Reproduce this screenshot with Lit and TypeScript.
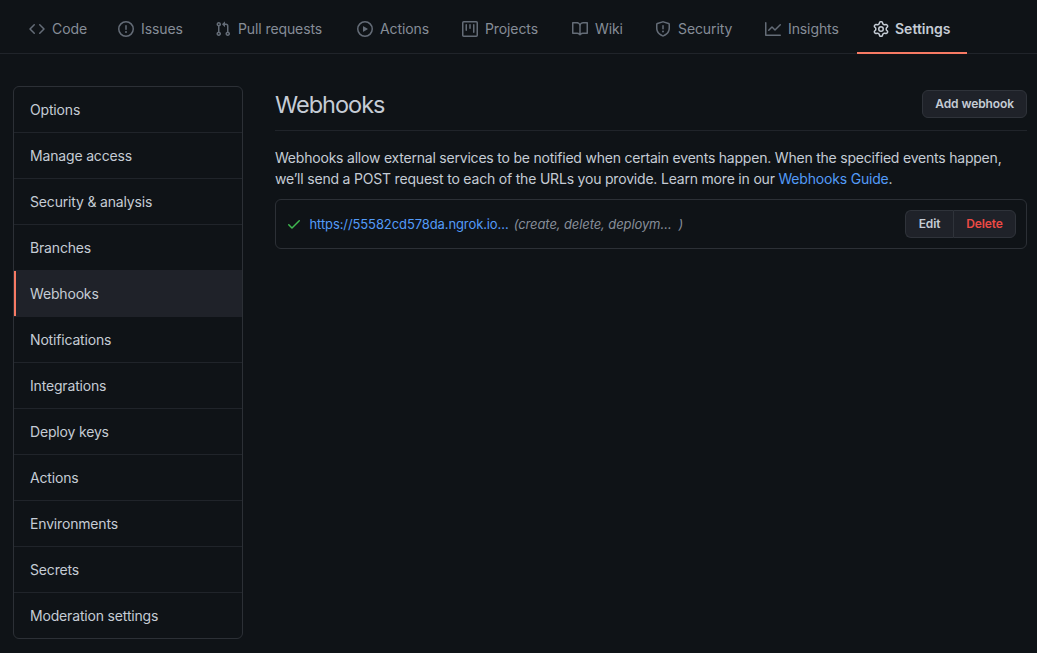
import { LitElement, html, css, svg } from "lit";
import { customElement, property } from "lit/decorators.js";
import { classMap } from "lit/directives/class-map.js";
import { styleMap } from "lit/directives/style-map.js";

const ICONS: Record<string, string> = {
  code: "M4.72 3.22a.75.75 0 011.06 1.06L2.06 8l3.72 3.72a.75.75 0 11-1.06 1.06L.47 8.53a.75.75 0 010-1.06l4.25-4.25zm6.56 0a.75.75 0 10-1.06 1.06L13.94 8l-3.72 3.72a.75.75 0 101.06 1.06l4.25-4.25a.75.75 0 000-1.06l-4.25-4.25z",
  issue: "M8 1.5a6.5 6.5 0 100 13 6.5 6.5 0 000-13zM0 8a8 8 0 1116 0A8 8 0 010 8zm9 3a1 1 0 11-2 0 1 1 0 012 0zm-.25-6.25a.75.75 0 00-1.5 0v3.5a.75.75 0 001.5 0v-3.5z",
  pull: "M7.177 3.073L9.573.677A.25.25 0 0110 .854v4.792a.25.25 0 01-.427.177L7.177 3.427a.25.25 0 010-.354zM3.75 2.5a.75.75 0 100 1.5.75.75 0 000-1.5zm-2.25.75a2.25 2.25 0 113 2.122v5.256a2.251 2.251 0 11-1.5 0V5.372A2.25 2.25 0 011.5 3.25zM11 2.5h-1V4h1a1 1 0 011 1v5.628a2.251 2.251 0 101.5 0V5A2.5 2.5 0 0011 2.5zm1 10.25a.75.75 0 111.5 0 .75.75 0 01-1.5 0zM3.75 12a.75.75 0 100 1.5.75.75 0 000-1.5z",
  play: "M1.5 8a6.5 6.5 0 1113 0 6.5 6.5 0 01-13 0zM8 0a8 8 0 100 16A8 8 0 008 0zM6.379 5.227A.25.25 0 006 5.442v5.117a.25.25 0 00.379.214l4.264-2.559a.25.25 0 000-.428L6.379 5.227z",
  project: "M1.75 0A1.75 1.75 0 000 1.75v12.5C0 15.216.784 16 1.75 16h12.5A1.75 1.75 0 0016 14.25V1.75A1.75 1.75 0 0014.25 0H1.75zM1.5 1.75a.25.25 0 01.25-.25h12.5a.25.25 0 01.25.25v12.5a.25.25 0 01-.25.25H1.75a.25.25 0 01-.25-.25V1.75zM11.75 3a.75.75 0 00-.75.75v7.5a.75.75 0 001.5 0v-7.5a.75.75 0 00-.75-.75zm-8.25.75a.75.75 0 011.5 0v5.5a.75.75 0 01-1.5 0v-5.5zM8 3a.75.75 0 00-.75.75v3.5a.75.75 0 001.5 0v-3.5A.75.75 0 008 3z",
  book: "M0 1.75A.75.75 0 01.75 1h4.253c1.227 0 2.317.59 3 1.501A3.744 3.744 0 0111.006 1h4.245a.75.75 0 01.75.75v10.5a.75.75 0 01-.75.75h-4.507a2.25 2.25 0 00-1.591.659l-.622.621a.75.75 0 01-1.06 0l-.622-.621A2.25 2.25 0 005.258 13H.75a.75.75 0 01-.75-.75V1.75zm8.755 3a2.25 2.25 0 012.25-2.25H14.5v9h-3.757c-.71 0-1.4.201-1.992.572l.004-7.322zm-1.504 7.324l.004-5.073-.002-2.253A2.25 2.25 0 005.003 2.5H1.5v9h3.757a3.75 3.75 0 011.994.574z",
  shield: "M7.467.133a1.75 1.75 0 011.066 0l5.25 1.68A1.75 1.75 0 0115 3.48V7c0 1.566-.32 3.182-1.303 4.682-.983 1.498-2.585 2.813-5.032 3.855a1.7 1.7 0 01-1.33 0c-2.447-1.042-4.049-2.357-5.032-3.855C1.32 10.182 1 8.566 1 7V3.48a1.75 1.75 0 011.217-1.667l5.25-1.68zm.61 1.429a.25.25 0 00-.153 0l-5.25 1.68a.25.25 0 00-.174.238V7c0 1.358.275 2.666 1.057 3.86.784 1.194 2.121 2.34 4.366 3.297a.2.2 0 00.154 0c2.245-.956 3.582-2.104 4.366-3.298C13.225 9.666 13.5 8.36 13.5 7V3.48a.25.25 0 00-.174-.237l-5.25-1.68zM9 10.5a1 1 0 11-2 0 1 1 0 012 0zm-.25-5.75a.75.75 0 10-1.5 0v3a.75.75 0 001.5 0v-3z",
  graph: "M1.5 1.75a.75.75 0 00-1.5 0v12.5c0 .414.336.75.75.75h14.5a.75.75 0 000-1.5H1.5V1.75zm14.28 2.53a.75.75 0 00-1.06-1.06L10 7.94 7.53 5.47a.75.75 0 00-1.06 0L3.22 8.72a.75.75 0 001.06 1.06L7 7.06l2.47 2.47a.75.75 0 001.06 0l5.25-5.25z",
  check: "M13.78 4.22a.75.75 0 010 1.06l-7.25 7.25a.75.75 0 01-1.06 0L2.22 9.28a.75.75 0 011.06-1.06L6 10.94l6.72-6.72a.75.75 0 011.06 0z",
  gear: "M7.429 1.525a6.593 6.593 0 011.142 0c.036.003.108.036.137.146l.289 1.105c.147.56.55.967.997 1.189.174.086.341.183.501.29.417.278.97.423 1.53.27l1.102-.303c.11-.03.175.016.195.046.219.31.41.641.573.989.014.031.022.11-.059.19l-.815.806c-.411.406-.562.957-.53 1.456a4.588 4.588 0 010 .582c-.032.499.119 1.05.53 1.456l.815.806c.08.08.073.159.059.19a6.494 6.494 0 01-.573.99c-.02.029-.086.074-.195.045l-1.103-.303c-.559-.153-1.112-.008-1.529.27-.16.107-.327.204-.5.29-.449.222-.851.628-.998 1.189l-.289 1.105c-.029.11-.101.143-.137.146a6.613 6.613 0 01-1.142 0c-.036-.003-.108-.037-.137-.146l-.289-1.105c-.147-.56-.55-.967-.997-1.189a4.502 4.502 0 01-.501-.29c-.417-.278-.97-.423-1.53-.27l-1.102.303c-.11.03-.175-.016-.195-.046a6.492 6.492 0 01-.573-.989c-.014-.031-.022-.11.059-.19l.815-.806c.411-.406.562-.957.53-1.456a4.587 4.587 0 010-.582c.032-.499-.119-1.05-.53-1.456l-.815-.806c-.08-.08-.073-.159-.059-.19a6.44 6.44 0 01.573-.99c.02-.029.086-.075.195-.045l1.103.303c.559.153 1.112.008 1.529-.27.16-.107.327-.204.5-.29.449-.222.851-.628.998-1.189l.289-1.105c.029-.11.101-.143.137-.146zM8 0c-.236 0-.47.01-.701.03-.743.065-1.29.615-1.458 1.261l-.29 1.106c-.017.066-.078.158-.211.224a5.994 5.994 0 00-.668.386c-.123.082-.233.09-.3.071L3.27 2.776c-.644-.177-1.392.02-1.82.63a7.977 7.977 0 00-.704 1.217c-.315.675-.111 1.422.363 1.891l.815.806c.05.048.098.147.088.294a6.084 6.084 0 000 .772c.01.147-.038.246-.088.294l-.815.806c-.474.469-.678 1.216-.363 1.891.2.428.436.835.704 1.218.428.609 1.176.806 1.82.63l1.103-.303c.066-.019.176-.011.299.071.213.143.436.272.668.386.133.066.194.158.212.224l.289 1.106c.169.646.715 1.196 1.458 1.26a8.094 8.094 0 001.402 0c.743-.064 1.29-.614 1.458-1.26l.29-1.106c.017-.066.078-.158.211-.224a5.98 5.98 0 00.668-.386c.123-.082.233-.09.3-.071l1.102.302c.644.177 1.392-.02 1.82-.63.268-.382.505-.789.704-1.217.315-.675.111-1.422-.364-1.891l-.814-.806c-.05-.048-.098-.147-.088-.294a6.1 6.1 0 000-.772c-.01-.147.039-.246.088-.294l.814-.806c.475-.469.679-1.216.364-1.891a7.992 7.992 0 00-.704-1.218c-.428-.609-1.176-.806-1.82-.63l-1.103.303c-.066.019-.176.011-.299-.071a5.991 5.991 0 00-.668-.386c-.133-.066-.194-.158-.212-.224L10.16 1.29C9.99.645 9.444.095 8.701.031A8.094 8.094 0 008 0zm1.5 8a1.5 1.5 0 11-3 0 1.5 1.5 0 013 0zM11 8a3 3 0 11-6 0 3 3 0 016 0z",
};

@customElement("oct-icon")
class OctIcon extends LitElement {
  @property() name = "code";
  static styles = css`
    :host { display: block; flex: none; width: 16px; height: 16px; }
    svg { display: block; fill: currentColor; }
  `;
  render() {
    return html`<svg width="16" height="16" viewBox="0 0 16 16">
      ${svg`<path fill-rule="evenodd" d=${ICONS[this.name]}></path>`}
    </svg>`;
  }
}

const TABS = [
  { icon: "code", label: "Code", width: 89 },
  { icon: "issue", label: "Issues", width: 97 },
  { icon: "pull", label: "Pull requests", width: 142 },
  { icon: "play", label: "Actions", width: 105 },
  { icon: "project", label: "Projects", width: 110 },
  { icon: "book", label: "Wiki", width: 83 },
  { icon: "shield", label: "Security", width: 110 },
  { icon: "graph", label: "Insights", width: 108 },
  { icon: "gear", label: "Settings", width: 110, active: true },
];

@customElement("repo-nav")
class RepoNav extends LitElement {
  static styles = css`
    :host { display: block; }
    .bar { display: flex; height: 53px; padding-left: 13px; border-bottom: 1px solid #20242a; }
    .tab {
      box-sizing: border-box; display: flex; align-items: center; gap: 7px; flex: none;
      height: 54px; padding: 4px 0 0 16px; border-bottom: 2px solid transparent;
      color: #868d97; white-space: nowrap; text-decoration: none; letter-spacing: -0.1px;
    }
    .tab oct-icon { color: #646c77; position: relative; top: 0.5px; }
    .active { gap: 6px; color: #c5ccd5; font-weight: 600; border-bottom-color: #f77a64; letter-spacing: 0; }
    .tab.active oct-icon { color: #c5ccd5; }
  `;
  render() {
    return html`<nav class="bar">
      ${TABS.map(
        (t) => html`<a class=${classMap({ tab: true, active: !!t.active })} style=${styleMap({ width: `${t.width}px` })}>
          <oct-icon name=${t.icon}></oct-icon><span>${t.label}</span>
        </a>`
      )}
    </nav>`;
  }
}

const MENU = [
  "Options", "Manage access", "Security & analysis", "Branches", "Webhooks", "Notifications",
  "Integrations", "Deploy keys", "Actions", "Environments", "Secrets", "Moderation settings",
];

@customElement("settings-menu")
class SettingsMenu extends LitElement {
  static styles = css`
    :host { display: block; }
    .menu { border: 1px solid #2c3036; border-radius: 6px; overflow: hidden; letter-spacing: -0.17px; }
    .item {
      box-sizing: border-box; display: flex; align-items: center; height: 46px;
      padding-left: 16px; border-bottom: 1px solid #20242a;
    }
    .item:last-child { height: 45px; border-bottom: 0; }
    .selected { background: #1f2229; box-shadow: inset 2px 0 0 #f77a64, 0 -1px 0 #1f2229; border-bottom-color: #1f2229; }
  `;
  render() {
    return html`<nav class="menu">
      ${MENU.map((m) => html`<div class=${classMap({ item: true, selected: m === "Webhooks" })}>${m}</div>`)}
    </nav>`;
  }
}

@customElement("app-root")
class AppRoot extends LitElement {
  static styles = css`
    :host {
      display: block; height: 653px; overflow: hidden; background: #0f1317; color: #c5ccd5;
      font: 14px/21px Inter, "Liberation Sans", sans-serif;
    }
    .page { display: grid; grid-template-columns: 230px 752px; column-gap: 32px; padding: 32px 10px 0 13px; }
    .head {
      box-sizing: border-box; display: flex; justify-content: space-between; align-items: flex-start;
      height: 45px; padding-top: 4px; border-bottom: 1px solid #20242a;
    }
    .title { margin: 0; font-size: 23.5px; line-height: 30px; font-weight: 400; letter-spacing: -1px; }
    .button {
      box-sizing: border-box; height: 28px; padding: 0 12px; border: 1px solid #2f333a; border-radius: 6px;
      background: #1f2229; color: #c5ccd5; font: 600 12px/20px Inter, "Liberation Sans", sans-serif;
      letter-spacing: -0.1px;
    }
    .intro { margin: 16px 0 10px; white-space: nowrap; letter-spacing: -0.21px; }
    .intro span { display: block; }
    .intro .second { letter-spacing: -0.195px; }
    .link { color: #539bf8; }
    .hook {
      box-sizing: border-box; display: flex; align-items: center; height: 50px; padding: 0 10px 0 10px;
      border: 1px solid #2c3036; border-radius: 6px; font-size: 13px; line-height: 20px; white-space: nowrap;
    }
    .hook oct-icon { color: #3fb950; margin-right: 7.5px; }
    .url { letter-spacing: -0.1px; padding-bottom: 1px; }
    .events { margin-left: 5px; padding-bottom: 1px; color: #868d97; font-style: italic; white-space: pre; letter-spacing: -0.1px; }
    .group { display: flex; margin-left: auto; }
    .edit { width: 48px; padding: 0; border-radius: 6px 0 0 6px; border-right: 0; }
    .delete { width: 63px; padding: 0; border-radius: 0 6px 6px 0; color: #ec4a45; }
  `;
  render() {
    return html`
      <repo-nav></repo-nav>
      <div class="page">
        <settings-menu></settings-menu>
        <main>
          <header class="head">
            <h2 class="title">Webhooks</h2>
            <button class="button">Add webhook</button>
          </header>
          <p class="intro">
            <span class="first">Webhooks allow external services to be notified when certain events happen. When the specified events happen,</span>
            <span class="second">we’ll send a POST request to each of the URLs you provide. Learn more in our <a class="link">Webhooks Guide</a>.</span>
          </p>
          <div class="hook">
            <oct-icon name="check"></oct-icon>
            <a class="link url">https://55582cd578da.ngrok.io…</a>
            <span class="events">(create, delete, deploym…  )</span>
            <div class="group">
              <button class="button edit">Edit</button><button class="button delete">Delete</button>
            </div>
          </div>
        </main>
      </div>
    `;
  }
}
